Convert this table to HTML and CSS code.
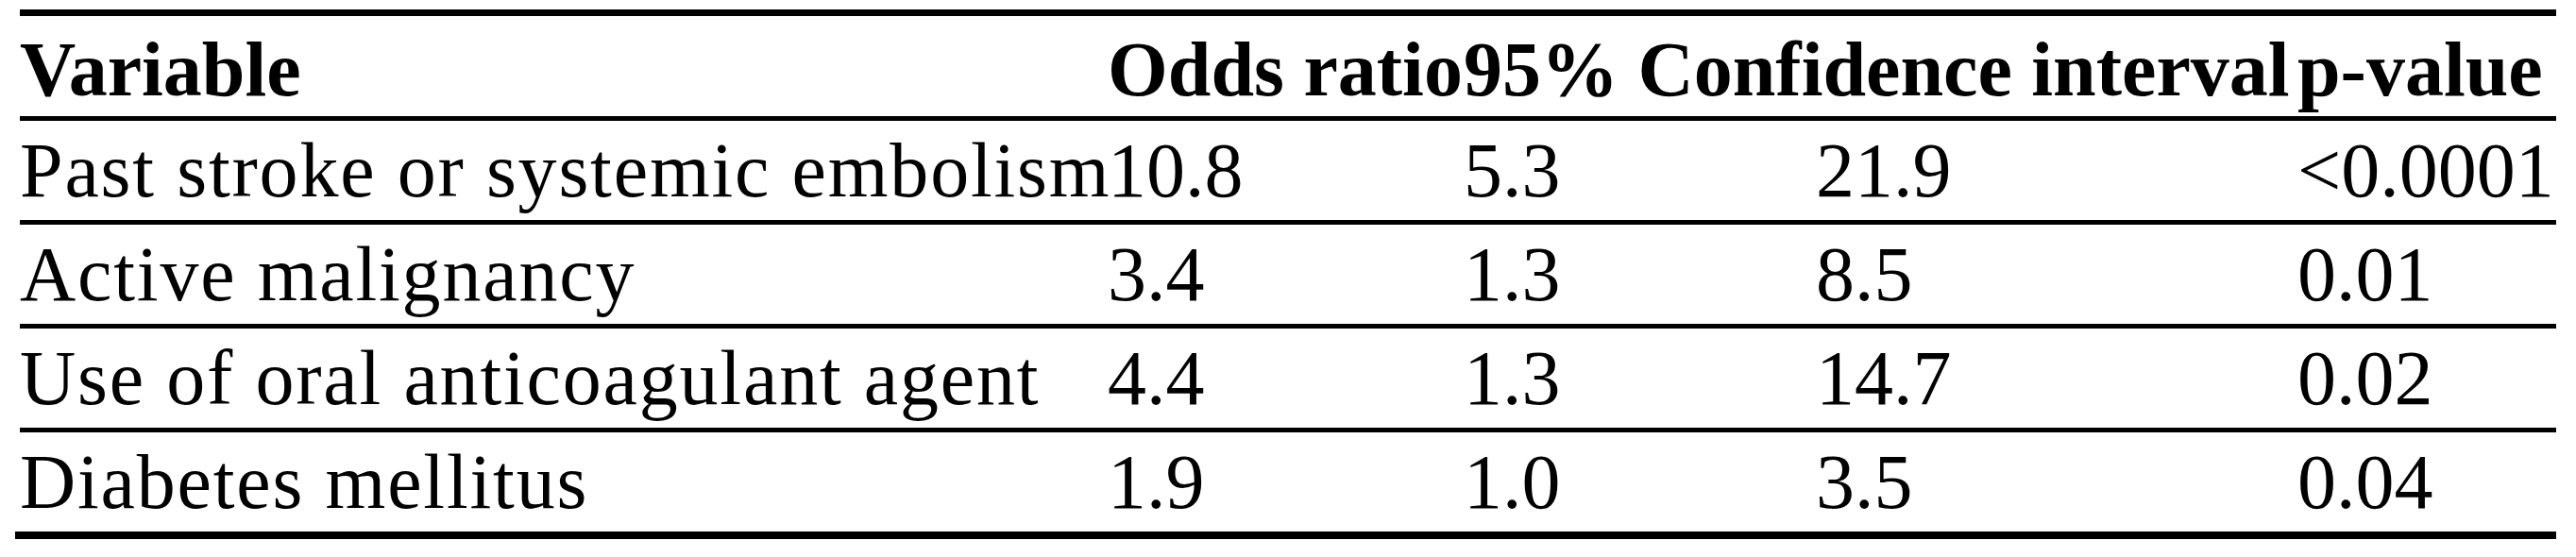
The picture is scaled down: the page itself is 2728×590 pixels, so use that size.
FILE: index.html
```html
<!DOCTYPE html>
<html lang="en">
<head>
<meta charset="utf-8">
<title>Multivariable analysis</title>
<link rel="stylesheet" href="styles.css">
</head>
<body>
<table class="results">
  <colgroup>
    <col class="c-var">
    <col class="c-or">
    <col class="c-lo">
    <col class="c-hi">
    <col class="c-p">
  </colgroup>
  <thead>
    <tr>
      <th>Variable</th>
      <th>Odds ratio</th>
      <th colspan="2">95% Confidence interval</th>
      <th>p-value</th>
    </tr>
  </thead>
  <tbody>
    <tr>
      <td>Past stroke or systemic embolism</td>
      <td class="num">10.8</td>
      <td class="num">5.3</td>
      <td class="num">21.9</td>
      <td class="num">&lt;0.0001</td>
    </tr>
    <tr>
      <td>Active malignancy</td>
      <td class="num">3.4</td>
      <td class="num">1.3</td>
      <td class="num">8.5</td>
      <td class="num">0.01</td>
    </tr>
    <tr>
      <td>Use of oral anticoagulant agent</td>
      <td class="num">4.4</td>
      <td class="num">1.3</td>
      <td class="num">14.7</td>
      <td class="num">0.02</td>
    </tr>
    <tr>
      <td>Diabetes mellitus</td>
      <td class="num">1.9</td>
      <td class="num">1.0</td>
      <td class="num">3.5</td>
      <td class="num">0.04</td>
    </tr>
  </tbody>
</table>
</body>
</html>
```
FILE: styles.css
```css
html, body {
  margin: 0;
  padding: 0;
  background: #fff;
}

body {
  font-family: "Liberation Serif", "Times New Roman", serif;
  color: #000;
}

.results {
  margin: 10px 0 0 16px;
  width: 2691px;
  table-layout: fixed;
  border-collapse: separate;
  border-spacing: 0;
  padding: 0 0 0 5px;
  border-bottom: 8px solid #000;
}

.c-var { width: 1152px; }
.c-or { width: 377px; }
.c-lo { width: 373px; }
.c-hi { width: 510px; }
.c-p { width: 274px; }

.results th,
.results td {
  padding: 0;
  text-align: left;
  vertical-align: top;
  white-space: nowrap;
  font-size: 82px;
}

.results th {
  font-weight: bold;
  border-top: 7px solid #000;
  border-bottom: 5px solid #000;
  padding-top: 8px;
  line-height: 98px;
}

.results td {
  font-weight: normal;
  line-height: 105px;
  letter-spacing: 1.8px;
  border-bottom: 5px solid #000;
}

.results td.num {
  letter-spacing: 0;
}

.results tbody tr:last-child td {
  border-bottom: 0;
}
```
